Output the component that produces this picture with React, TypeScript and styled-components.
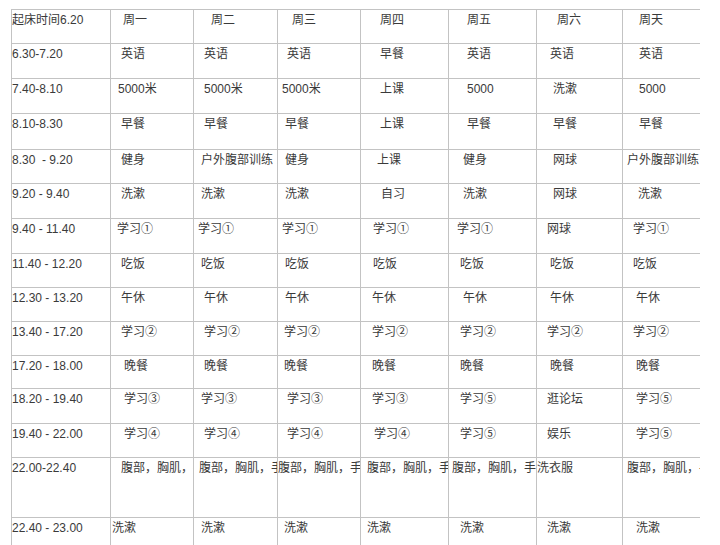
import React from "react";
import styled, { createGlobalStyle } from "styled-components";

const GlobalStyle = createGlobalStyle`
  html, body { margin: 0; padding: 0; background: #ffffff; }
  body { font-family: "Liberation Sans", "Noto Sans CJK SC", sans-serif; }
  * { box-sizing: border-box; }
`;

const COLS = [99, 83, 84, 83, 88, 88, 86, 100];
const ROWS = [34, 35, 35, 36, 34, 35, 35, 34, 34, 34, 33, 35, 34, 60, 40];

const Viewport = styled.div`
  width: 700px;
  height: 545px;
  overflow: hidden;
  padding: 9px 0 0 11px;
  background: #ffffff;
`;

const Sheet = styled.div`
  display: grid;
  grid-template-columns: ${COLS.map((w) => `${w}px`).join(" ")};
  grid-template-rows: ${ROWS.map((h) => `${h}px`).join(" ")};
  width: max-content;
  border-top: 1px solid #c3c3c3;
  border-left: 1px solid #c3c3c3;
`;

const Cell = styled.div<{ $indent: number }>`
  border-right: 1px solid #c3c3c3;
  border-bottom: 1px solid #c3c3c3;
  padding: 2px 0 0 ${(p) => Math.max(0, p.$indent - 1)}px;
  font-size: 12px;
  line-height: 17px;
  color: #3a3a3a;
  white-space: pre;
  overflow: hidden;
`;

type C = [string, number];

const DATA: C[][] = [
  [["起床时间6.20", 1], ["周一", 13], ["周二", 18], ["周三", 15], ["周四", 20], ["周五", 19], ["周六", 21], ["周天", 17]],
  [["6.30-7.20", 1], ["英语", 11], ["英语", 11], ["英语", 10], ["早餐", 20], ["英语", 19], ["英语", 14], ["英语", 17]],
  [["7.40-8.10", 1], ["5000米", 8], ["5000米", 11], ["5000米", 5], ["上课", 20], ["5000", 19], ["洗漱", 17], ["5000", 17]],
  [["8.10-8.30", 1], ["早餐", 11], ["早餐", 11], ["早餐", 8], ["上课", 20], ["早餐", 19], ["早餐", 17], ["早餐", 17]],
  [["8.30  - 9.20", 1], ["健身", 11], ["户外腹部训练", 8], ["健身", 8], ["上课", 17], ["健身", 15], ["网球", 17], ["户外腹部训练", 5]],
  [["9.20 - 9.40", 1], ["洗漱", 11], ["洗漱", 8], ["洗漱", 8], ["自习", 21], ["洗漱", 15], ["网球", 17], ["洗漱", 16]],
  [["9.40 - 11.40", 1], ["学习①", 7], ["学习①", 5], ["学习①", 5], ["学习①", 13], ["学习①", 9], ["网球", 11], ["学习①", 11]],
  [["11.40 - 12.20", 1], ["吃饭", 11], ["吃饭", 8], ["吃饭", 8], ["吃饭", 13], ["吃饭", 12], ["吃饭", 14], ["吃饭", 11]],
  [["12.30 - 13.20", 1], ["午休", 11], ["午休", 11], ["午休", 8], ["午休", 12], ["午休", 15], ["午休", 14], ["午休", 14]],
  [["13.40 - 17.20", 1], ["学习②", 11], ["学习②", 11], ["学习②", 7], ["学习②", 12], ["学习②", 12], ["学习②", 11], ["学习②", 11]],
  [["17.20 - 18.00", 1], ["晚餐", 14], ["晚餐", 11], ["晚餐", 7], ["晚餐", 12], ["晚餐", 12], ["晚餐", 14], ["晚餐", 14]],
  [["18.20 - 19.40", 1], ["学习③", 14], ["学习③", 8], ["学习③", 10], ["学习③", 12], ["学习⑤", 12], ["逛论坛", 11], ["学习⑤", 14]],
  [["19.40 - 22.00", 1], ["学习④", 14], ["学习④", 11], ["学习④", 10], ["学习④", 14], ["学习⑤", 12], ["娱乐", 11], ["学习⑤", 14]],
  [["22.00-22.40", 1], ["腹部，胸肌，手臂", 11], ["腹部，胸肌，手臂", 6], ["腹部，胸肌，手臂", 1], ["腹部，胸肌，手臂", 7], ["腹部，胸肌，手臂", 4], ["洗衣服", 0], ["腹部，胸肌，手臂", 5]],
  [["22.40 - 23.00", 1], ["洗漱", 2], ["洗漱", 8], ["洗漱", 7], ["洗漱", 7], ["洗漱", 12], ["洗漱", 11], ["洗漱", 14]],
];

export default function App() {
  return (
    <>
      <GlobalStyle />
      <Viewport>
        <Sheet>
          {DATA.map((row, r) =>
            row.map(([text, indent], c) => (
              <Cell key={`${r}-${c}`} $indent={indent}>
                {text}
              </Cell>
            ))
          )}
        </Sheet>
      </Viewport>
    </>
  );
}
